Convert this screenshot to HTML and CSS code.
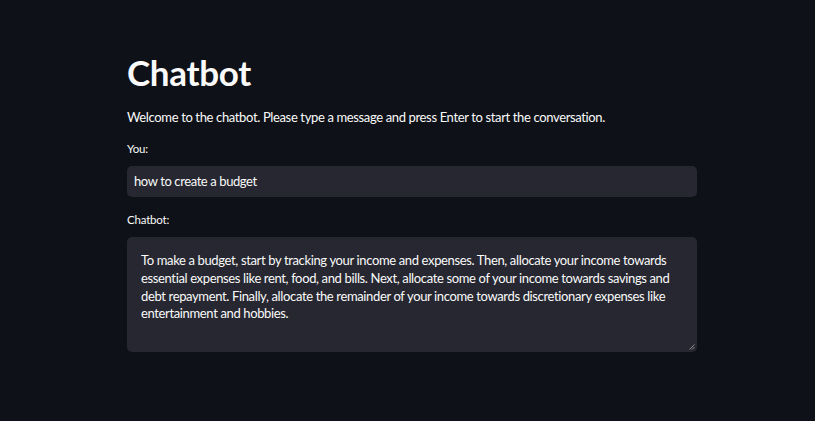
FILE: index.html
```html
<!DOCTYPE html>
<html>
<head>
<meta charset="utf-8">
<link rel="stylesheet" href="styles.css">
</head>
<body>
<main class="main">
  <div class="block">
    <h1 class="title">Chatbot</h1>
    <p class="intro">Welcome to the chatbot. Please type a message and press Enter to start the conversation.</p>
    <div class="field">
      <label class="label">You:</label>
      <div class="input">how to create a budget</div>
    </div>
    <div class="field">
      <label class="label">Chatbot:</label>
      <div class="textarea">To make a budget, start by tracking your income and expenses. Then, allocate your income towards essential expenses like rent, food, and bills. Next, allocate some of your income towards savings and debt repayment. Finally, allocate the remainder of your income towards discretionary expenses like entertainment and hobbies.
        <svg class="grip" width="6" height="6" viewBox="0 0 6 6"><path d="M5.5 0.5 L0.5 5.5 M5.5 3 L3 5.5" stroke="#8a8b93" stroke-width="1"/></svg>
      </div>
    </div>
  </div>
</main>
</body>
</html>
```
FILE: styles.css
```css
html, body {
  margin: 0;
  padding: 0;
  background: #0e1117;
  color: #fafafa;
  font-family: Lato, "Open Sans", sans-serif;
}
.main {
  width: 815px;
  height: 421px;
  box-sizing: border-box;
  padding: 51px 118px 0 127px;
}
.block {
  display: flex;
  flex-direction: column;
}
.title {
  margin: 0;
  font-size: 35px;
  font-weight: 700;
  line-height: 42px;
  letter-spacing: -0.3px;
}
.intro {
  margin: 14px 0 0;
  font-size: 13px;
  line-height: 20px;
  letter-spacing: -0.36px;
}
.field {
  display: flex;
  flex-direction: column;
  margin-top: 15px;
}
.field + .field {
  margin-top: 16px;
}
.label {
  font-size: 11.5px;
  line-height: 14px;
  margin-bottom: 10px;
  letter-spacing: -0.2px;
}
.input {
  background: #262730;
  border-radius: 5px;
  height: 31px;
  box-sizing: border-box;
  padding: 0 7px;
  font-size: 13px;
  line-height: 31px;
  letter-spacing: -0.4px;
}
.textarea {
  position: relative;
  background: #262730;
  border-radius: 5px;
  height: 115px;
  box-sizing: border-box;
  padding: 15px 14px 12px;
  font-size: 13px;
  line-height: 17.8px;
  letter-spacing: -0.36px;
}
.grip {
  position: absolute;
  right: 2px;
  bottom: 2px;
}
```
